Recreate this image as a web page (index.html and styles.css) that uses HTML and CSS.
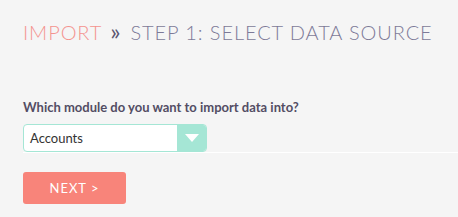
FILE: index.html
```html
<!DOCTYPE html>
<html>
<head>
    <meta charset="utf-8">
    <meta name="viewport" content="width=device-width, initial-scale=1">
    <title>Import</title>
    <link rel="stylesheet" href="styles.css">
</head>
<body>
    <div class="page">
        <h2 class="title">
            <span class="crumb">Import</span>
            <span class="sep">&raquo;</span>
            <span class="step">Step 1: Select data source</span>
        </h2>

        <div class="field">
            <label class="field_label">Which module do you want to import data into?</label>
            <div class="row">
                <div class="select">
                    <span class="select_value">Accounts</span>
                    <span class="select_arrow"></span>
                </div>
            </div>
        </div>

        <button class="btn">Next &gt;</button>
    </div>
</body>
</html>
```

FILE: styles.css
```css
body {
    margin: 0;
    background-color: #f5f5f5;
    font-family: Lato, "Open Sans", sans-serif;
}
.page {
    padding: 18px 0 0 23px;
}
.title {
    display: flex;
    align-items: baseline;
    margin: 0;
    font-size: 20px;
    font-weight: 300;
    letter-spacing: 0.9px;
    text-transform: uppercase;
    line-height: 26px;
    white-space: nowrap;
}
.crumb {
    color: #f4938f;
}
.sep {
    color: #5b5670;
    font-size: 24px;
    font-weight: 400;
    margin: 0 9px 0 8px;
}
.step {
    color: #7d7a98;
}
.field {
    margin-top: 54px;
}
.field_label {
    display: block;
    font-size: 13px;
    font-weight: 700;
    color: #534d64;
    line-height: 16px;
}
.row {
    margin-top: 9px;
    border-bottom: 1px solid #ffffff;
}
.select {
    display: flex;
    width: 184px;
    height: 28px;
    box-sizing: border-box;
    border: 1px solid #a5e6d5;
    border-radius: 4px;
    background-color: #fff;
    overflow: hidden;
}
.select_value {
    flex: 1;
    padding-left: 6px;
    font-size: 13px;
    line-height: 26px;
    color: #333;
}
.select_arrow {
    position: relative;
    width: 29px;
    background-color: #a5e6d5;
}
.select_arrow::after {
    content: "";
    position: absolute;
    left: 8px;
    top: 9px;
    border-left: 7px solid transparent;
    border-right: 7px solid transparent;
    border-top: 8px solid #fff;
}
.btn {
    display: block;
    margin-top: 19px;
    width: 103px;
    height: 32px;
    border: none;
    border-radius: 3px;
    background-color: #f8847a;
    color: #fff;
    font-family: Lato, "Open Sans", sans-serif;
    font-size: 13px;
    letter-spacing: 1px;
    text-transform: uppercase;
    padding: 0;
}
```
